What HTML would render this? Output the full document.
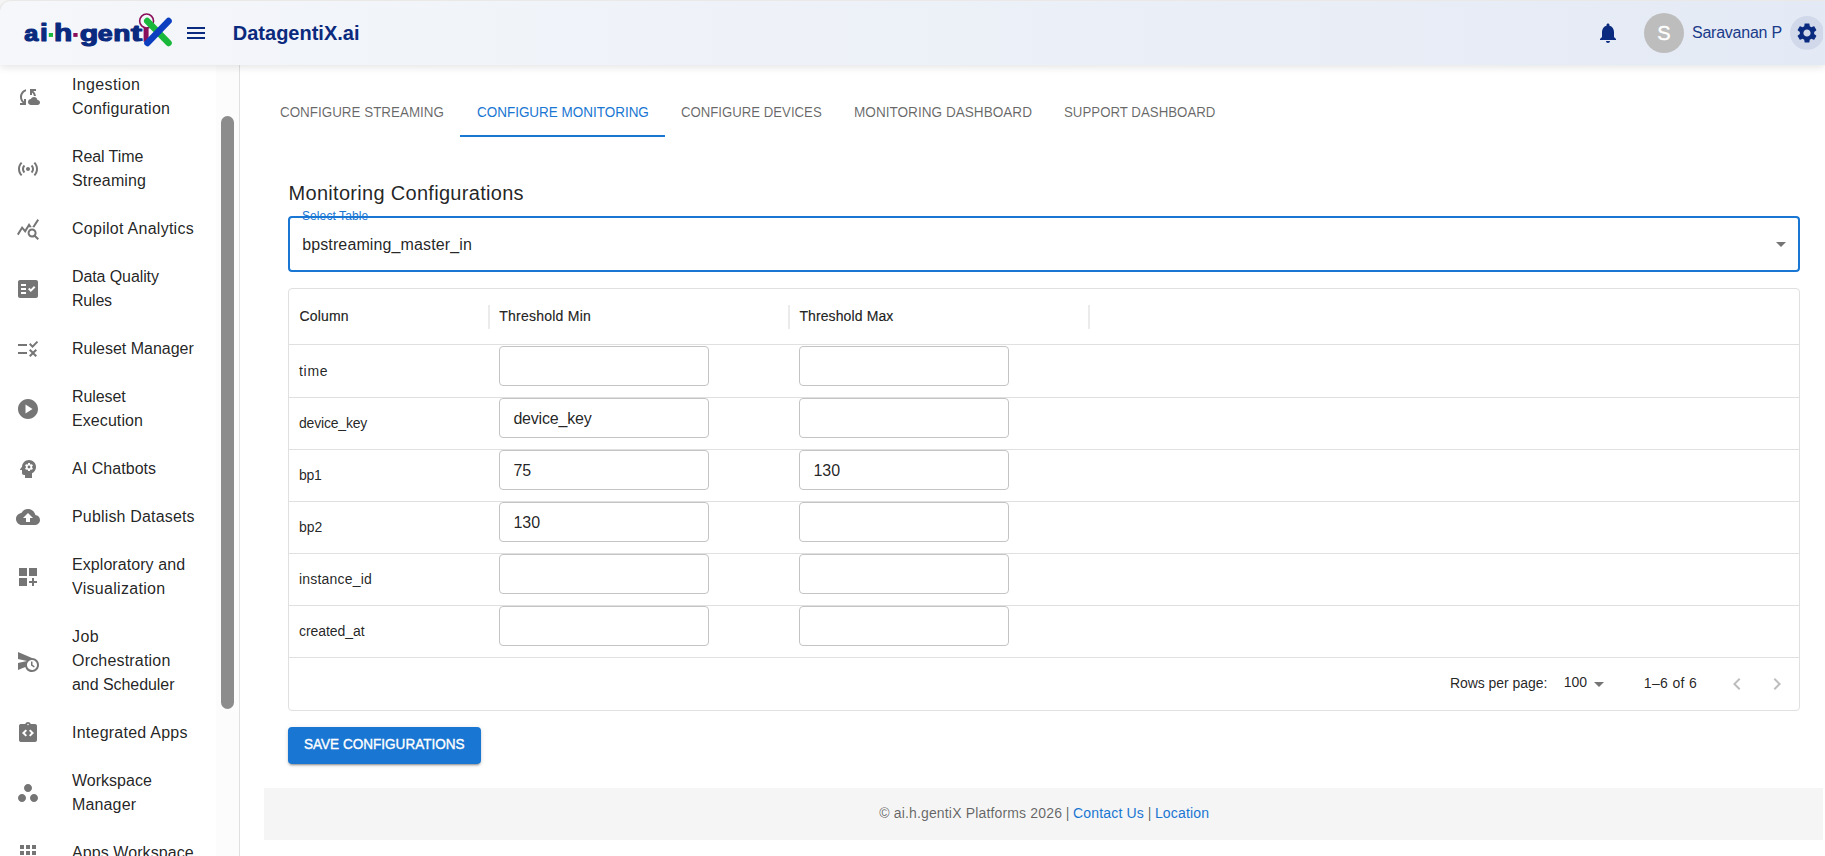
<!DOCTYPE html>
<html>
<head>
<meta charset="utf-8">
<title>DatagentiX.ai</title>
<style>
*{box-sizing:border-box;margin:0;padding:0}
html,body{width:1825px;height:856px;overflow:hidden;background:#fff}
body{font-family:"Liberation Sans",sans-serif;color:rgba(0,0,0,.87);position:relative}
.abs{position:absolute}
.nw{white-space:nowrap}
#topstrip{left:0;top:0;width:1825px;height:12px;background:#f7f7f7}
#frame{left:-1px;top:0;width:1830px;height:30px;border-top:1px solid #eae9e7;border-left:1px solid #e6e6e6;border-top-left-radius:12px;z-index:8}
#hdr{left:0;top:1px;width:1825px;height:64px;background:linear-gradient(90deg,#f5f7fa 0%,#e4eaf5 100%);border-top-left-radius:11px;box-shadow:0 2px 8px rgba(0,0,0,.115);z-index:5}
.z6{z-index:6}
#title{left:232.8px;top:21px;font-size:20px;font-weight:700;color:#0b2a7d;line-height:24px;white-space:nowrap;letter-spacing:0}
#uname{left:1692px;top:23px;font-size:16px;color:#1a3a8a;line-height:20px;white-space:nowrap;letter-spacing:-.24px}
#avatar{left:1644px;top:13px;width:40px;height:40px;border-radius:50%;background:#bdbdbd;color:#fff;font-size:20px;line-height:40px;text-align:center;-webkit-text-stroke:.4px #fff}
#gearbg{left:1789.8px;top:15.8px;width:34px;height:34px;border-radius:50%;background:#d0d8ea;clip-path:inset(0 .8px 0 0)}
#side{left:0;top:60px;width:240px;height:796px;border-right:1px solid #e0e0e0;background:#fff;overflow:hidden}
#track{left:216px;top:0;width:23px;height:796px;background:#fcfcfc}
#thumb{left:221px;top:56px;width:13px;height:593px;border-radius:7px;background:#8c8c8c}
.it{position:absolute;left:0;width:216px}
.it svg{position:absolute;left:16px;width:24px;height:24px;fill:#757575}
.it .t{position:absolute;left:72px;font-size:16px;line-height:24px;white-space:nowrap;color:rgba(0,0,0,.87)}
.it .t span{display:block}
.tab{position:absolute;top:88px;height:48px;font-size:14px;line-height:48px;color:rgba(0,0,0,.6);white-space:nowrap;transform-origin:0 50%}
.tab.on{color:#1976d2}
#ul{left:460px;top:135px;width:205px;height:2px;background:#1976d2}
#h6{left:288.5px;top:177px;font-size:20px;line-height:32px;white-space:nowrap;letter-spacing:.3px}
#sel{left:288px;top:216px;width:1512px;height:56px;border:2px solid #1976d2;border-radius:4px}
#sellab{left:302px;top:209px;font-size:12px;line-height:14px;color:#1976d2;white-space:nowrap;letter-spacing:.09px}
#selval{left:302.2px;top:233px;font-size:16px;line-height:24px;white-space:nowrap;letter-spacing:.12px}
#grid{left:288px;top:288px;width:1512px;height:423px;border:1px solid #e0e0e0;border-radius:4px}
.hl{position:absolute;left:289px;width:1510px;height:1px;background:#e0e0e0}
.sep{position:absolute;top:305px;width:2px;height:24px;background:#ebebeb}
.ch{position:absolute;top:306px;font-size:14px;line-height:20px;white-space:nowrap;-webkit-text-stroke:.2px rgba(0,0,0,.87)}
.cn{position:absolute;left:299px;font-size:14px;line-height:20px;white-space:nowrap}
.inp{position:absolute;width:210px;height:40px;border:1px solid #c4c4c4;border-radius:4px;background:#fff;font-size:16px;line-height:40px;padding-left:13.4px;white-space:nowrap}
.pg{position:absolute;top:673px;font-size:14px;line-height:20px;white-space:nowrap}
#btn{left:288px;top:727px;width:193px;height:37px;border-radius:4px;background:#1976d2;box-shadow:0 3px 1px -2px rgba(0,0,0,.2),0 2px 2px 0 rgba(0,0,0,.14),0 1px 5px 0 rgba(0,0,0,.12)}
#btnt{left:304.1px;top:732px;color:#fff;font-size:14px;line-height:24px;white-space:nowrap;-webkit-text-stroke:.35px #fff;transform-origin:0 50%;transform:scaleX(.968)}
#foot{left:264px;top:788px;width:1559px;height:52px;background:#f5f5f5}
#foott{left:879.2px;top:803px;font-size:14px;line-height:20px;color:rgba(0,0,0,.6);white-space:nowrap;letter-spacing:.16px}
#foott span{color:#1976d2}
#foott i{font-style:normal;letter-spacing:-.15px}
</style>
</head>
<body>
<div class="abs" id="topstrip"></div>
<div class="abs" id="hdr"></div>
<div class="abs" id="frame"></div>
<svg class="abs z6" style="left:0;top:0" width="240" height="66" viewBox="0 0 240 66">
  <g font-family="Liberation Sans, sans-serif" font-weight="700" font-size="100" fill="#0a2a7f" stroke="#0a2a7f" stroke-width="1.3" stroke-linejoin="round">
    <text vector-effect="non-scaling-stroke" transform="translate(24.19,40.88) scale(0.2527,0.2218)">a</text>
    <text vector-effect="non-scaling-stroke" transform="translate(40.02,40.90) scale(0.2800,0.2466)">i</text>
    <text vector-effect="non-scaling-stroke" transform="translate(53.96,40.90) scale(0.2990,0.2356)">h</text>
    <text vector-effect="non-scaling-stroke" transform="translate(79.64,41.04) scale(0.3029,0.2171)">g</text>
    <text vector-effect="non-scaling-stroke" transform="translate(97.70,40.88) scale(0.2680,0.2182)">e</text>
    <text vector-effect="non-scaling-stroke" transform="translate(113.21,40.70) scale(0.2816,0.2148)">n</text>
    <text vector-effect="non-scaling-stroke" transform="translate(130.76,40.87) scale(0.3437,0.2269)">t</text>
  </g>
  <rect x="48.8" y="33" width="4.2" height="3.9" fill="#1ab83a"/>
  <rect x="73.300" y="33" width="4.300" height="3.900" fill="#8a0f5a"/>
  <rect x="143.600" y="27.500" width="5" height="14.300" fill="#8a0f5a"/>
  <circle cx="146.600" cy="21" r="6.950" fill="none" stroke="#8a0f5a" stroke-width="1.600"/>
  <line x1="147.200" y1="21" x2="168.600" y2="43" stroke="#1ab83a" stroke-width="6.400" stroke-linecap="round"/>
  <line x1="168.600" y1="21" x2="147.400" y2="43" stroke="#0c3fc0" stroke-width="6.400" stroke-linecap="round"/>
  <path transform="translate(184,21)" fill="#0a2a7f" d="M3 18h18v-2H3v2zm0-5h18v-2H3v2zm0-7v2h18V6H3z"/>
</svg>
<div class="abs z6" id="title">DatagentiX.ai</div>
<svg class="abs z6" style="left:1596px;top:21px" width="24" height="24" viewBox="0 0 24 24"><path fill="#0a2a7f" d="M12 22c1.1 0 2-.9 2-2h-4c0 1.1.89 2 2 2zm6-6v-5c0-3.07-1.64-5.64-4.5-6.32V4c0-.83-.67-1.500-1.500-1.500s-1.500.67-1.500 1.500v.68C7.630 5.360 6 7.920 6 11v5l-2 2v1h16v-1l-2-2z"/></svg>
<div class="abs z6" id="avatar">S</div>
<div class="abs z6" id="uname">Saravanan P</div>
<div class="abs z6" id="gearbg"></div>
<svg class="abs z6" style="left:1794.5px;top:21px;z-index:7" width="24" height="24" viewBox="0 0 24 24"><path fill="#0a2a7f" d="M19.14 12.94c.04-.3.06-.61.06-.94 0-.32-.02-.64-.07-.94l2.03-1.58c.18-.14.23-.41.12-.61l-1.92-3.32c-.12-.22-.37-.29-.59-.22l-2.39.96c-.5-.38-1.03-.7-1.62-.94l-.36-2.54c-.04-.24-.24-.41-.48-.41h-3.84c-.24 0-.43.17-.47.41l-.36 2.54c-.59.24-1.13.57-1.62.94l-2.39-.96c-.22-.08-.47 0-.59.22L2.74 8.87c-.12.21-.08.47.12.61l2.03 1.58c-.05.3-.09.63-.09.94s.02.64.07.94l-2.03 1.58c-.18.14-.23.41-.12.61l1.92 3.32c.12.22.37.29.59.22l2.39-.96c.5.38 1.03.7 1.620.94l.36 2.54c.05.24.24.41.48.41h3.840c.24 0 .44-.17.47-.41l.36-2.54c.59-.24 1.130-.56 1.620-.94l2.390.96c.22.08.47 0 .59-.22l1.920-3.320c.12-.22.07-.47-.12-.61l-2.010-1.580zM12 15.600c-1.980 0-3.600-1.620-3.600-3.600s1.620-3.600 3.600-3.600 3.600 1.620 3.600 3.600-1.620 3.600-3.600 3.600z"/></svg>
<div class="abs" id="side">
<div class="it" style="top:0px;height:72px"><svg viewBox="0 0 24 24" style="top:25px"><path d="M21.5 14.98c-.02 0-.03 0-.05.01C21.2 13.3 19.76 12 18 12c-1.4 0-2.6.83-3.16 2.02C13.26 14.1 12 15.4 12 17c0 1.66 1.34 3 3 3l6.5-.02c1.38 0 2.5-1.12 2.5-2.5s-1.12-2.5-2.5-2.5zM10 4.26v2.09C7.67 7.18 6 9.39 6 12c0 1.77.78 3.34 2 4.44V14h2v6H4v-2h2.73C5.06 16.54 4 14.4 4 12c0-3.73 2.55-6.85 6-7.74zM20 6h-2.73c1.43 1.26 2.41 3.01 2.66 5h-2.02c-.23-1.36-.93-2.55-1.91-3.44V10h-2V4h6v2z"/></svg><div class="t" style="top:13px"><span style="letter-spacing:0.36px">Ingestion</span><span style="letter-spacing:0.23px">Configuration</span></div></div>
<div class="it" style="top:72px;height:72px"><svg viewBox="0 0 24 24" style="top:25px"><path d="M7.76 16.24C6.67 15.16 6 13.66 6 12s.67-3.16 1.76-4.24l1.42 1.42C8.45 9.9 8 10.9 8 12c0 1.1.45 2.1 1.17 2.83l-1.41 1.41zm8.48 0C17.33 15.16 18 13.66 18 12s-.67-3.16-1.76-4.24l-1.42 1.42C15.55 9.9 16 10.9 16 12c0 1.1-.45 2.1-1.17 2.83l1.41 1.41zM12 10c-1.1 0-2 .9-2 2s.9 2 2 2 2-.9 2-2-.9-2-2-2zm8 2c0 2.21-.9 4.21-2.35 5.65l1.42 1.42C20.88 17.26 22 14.76 22 12s-1.12-5.26-2.93-7.07l-1.42 1.42C19.1 7.79 20 9.79 20 12zM6.35 6.35 4.93 4.93C3.12 6.74 2 9.24 2 12s1.12 5.26 2.93 7.07l1.42-1.42C4.9 16.21 4 14.21 4 12s.9-4.21 2.35-5.65z"/></svg><div class="t" style="top:13px"><span style="letter-spacing:-0.09px">Real Time</span><span style="letter-spacing:0.13px">Streaming</span></div></div>
<div class="it" style="top:144px;height:48px"><svg viewBox="0 0 24 24" style="top:13px"><path d="M19.88 18.47c.44-.7.7-1.51.7-2.39 0-2.49-2.01-4.5-4.5-4.5s-4.5 2.01-4.5 4.5 2.01 4.5 4.49 4.5c.88 0 1.7-.26 2.39-.7L21.58 23 23 21.58l-3.12-3.11zm-3.8.11c-1.38 0-2.5-1.12-2.5-2.5s1.12-2.5 2.5-2.5 2.5 1.12 2.5 2.5-1.12 2.5-2.5 2.5zm-.36-8.5c-.74.02-1.45.18-2.1.45l-.55-.83-3.8 6.18-3.01-3.52-3.63 5.81L1 17l5-8 3 3.5L13 6l2.72 4.08zm2.59.5c-.64-.28-1.33-.45-2.05-.49L21.38 2 23 3.18l-4.69 7.4z"/></svg><div class="t" style="top:13px"><span style="letter-spacing:0.27px">Copilot Analytics</span></div></div>
<div class="it" style="top:192px;height:72px"><svg viewBox="0 0 24 24" style="top:25px"><path d="M20 3H4c-1.1 0-2 .9-2 2v14c0 1.1.9 2 2 2h16c1.1 0 2-.9 2-2V5c0-1.1-.9-2-2-2zM10 17H5v-2h5v2zm0-4H5v-2h5v2zm0-4H5V7h5v2zm4.82 6L12 12.16l1.41-1.41 1.41 1.42L17.99 9l1.42 1.42L14.82 15z"/></svg><div class="t" style="top:13px"><span style="letter-spacing:-0.1px">Data Quality</span><span style="letter-spacing:-0.2px">Rules</span></div></div>
<div class="it" style="top:264px;height:48px"><svg viewBox="0 0 24 24" style="top:13px"><path d="M16.54 11 13 7.46l1.41-1.41 2.12 2.12 4.24-4.24 1.41 1.41L16.54 11zM11 7H2v2h9V7zm10 6.41L19.59 12 17 14.59 14.41 12 13 13.41 15.59 16 13 18.59 14.41 20 17 17.41 19.59 20 21 18.59 18.41 16 21 13.41zM11 15H2v2h9v-2z"/></svg><div class="t" style="top:13px"><span style="letter-spacing:0px">Ruleset Manager</span></div></div>
<div class="it" style="top:312px;height:72px"><svg viewBox="0 0 24 24" style="top:25px"><path d="M12 2C6.48 2 2 6.48 2 12s4.48 10 10 10 10-4.48 10-10S17.52 2 12 2zM9.5 16.5v-9l7 4.5-7 4.5z"/></svg><div class="t" style="top:13px"><span style="letter-spacing:-0.1px">Ruleset</span><span style="letter-spacing:0.08px">Execution</span></div></div>
<div class="it" style="top:384px;height:48px"><svg viewBox="0 0 24 24" style="top:13px"><path d="M13 8.57c-.79 0-1.43.64-1.43 1.43s.64 1.43 1.43 1.43 1.43-.64 1.43-1.43-.64-1.43-1.43-1.43z M13 3C9.25 3 6.2 5.94 6.02 9.64L4.1 12.2c-.25.33-.01.8.4.8H6v3c0 1.1.9 2 2 2h1v3h7v-4.68c2.36-1.12 4-3.53 4-6.32 0-3.87-3.13-7-7-7zm3 7c0 .13-.01.26-.02.39l.83.66c.08.06.1.16.05.25l-.8 1.39c-.05.09-.16.12-.24.09l-.99-.4c-.21.16-.43.29-.67.39L14 13.83c-.01.1-.1.17-.2.17h-1.6c-.1 0-.18-.07-.2-.17l-.15-1.06c-.25-.1-.47-.23-.68-.39l-.99.4c-.9.03-.2 0-.25-.09l-.8-1.39c-.05-.08-.03-.19.05-.25l.84-.66c-.01-.13-.02-.26-.02-.39s.02-.27.04-.39l-.85-.66c-.08-.06-.1-.16-.05-.26l.8-1.38c.05-.09.15-.12.24-.09l1 .4c.2-.15.43-.29.67-.39L12 6.17c.02-.1.1-.17.2-.17h1.6c.1 0 .18.07.2.17l.15 1.06c.24.1.46.23.67.39l1-.4c.09-.03.2 0 .24.09l.8 1.38c.05.09.03.2-.05.26l-.85.66c.03.12.04.25.04.39z"/></svg><div class="t" style="top:13px"><span style="letter-spacing:0.05px">AI Chatbots</span></div></div>
<div class="it" style="top:432px;height:48px"><svg viewBox="0 0 24 24" style="top:13px"><path d="M19.35 10.04C18.67 6.59 15.64 4 12 4 9.11 4 6.6 5.64 5.35 8.04 2.34 8.36 0 10.91 0 14c0 3.31 2.69 6 6 6h13c2.76 0 5-2.24 5-5 0-2.64-2.05-4.78-4.65-4.96zM14 13v4h-4v-4H7l5-5 5 5h-3z"/></svg><div class="t" style="top:13px"><span style="letter-spacing:0.17px">Publish Datasets</span></div></div>
<div class="it" style="top:480px;height:72px"><svg viewBox="0 0 24 24" style="top:25px"><path d="M3 3h8v8H3zm10 0h8v8h-8zM3 13h8v8H3zm15 0h-2v3h-3v2h3v3h2v-3h3v-2h-3z"/></svg><div class="t" style="top:13px"><span style="letter-spacing:0.07px">Exploratory and</span><span style="letter-spacing:0.3px">Visualization</span></div></div>
<div class="it" style="top:552px;height:96px"><svg viewBox="0 0 24 24" style="top:37px"><path d="M16.5 12.5H15v4l3 2 .75-1.23-2.25-1.52V12.5zM16 9 2 3v7l9 2-9 2v7l7.27-3.11C10.09 20.83 12.79 23 16 23c3.86 0 7-3.14 7-7s-3.14-7-7-7zm0 12c-2.75 0-4.98-2.22-5-4.97v-.07c.02-2.74 2.25-4.97 5-4.97 2.76 0 5 2.24 5 5S18.76 21 16 21z"/></svg><div class="t" style="top:13px"><span style="letter-spacing:0.4px">Job</span><span style="letter-spacing:0.19px">Orchestration</span><span style="letter-spacing:-0.06px">and Scheduler</span></div></div>
<div class="it" style="top:648px;height:48px"><svg viewBox="0 0 24 24" style="top:13px"><path d="M19 3h-4.180C14.4 1.84 13.3 1 12 1s-2.4.84-2.82 2H5c-.14 0-.27.01-.4.04-.39.08-.74.28-1.010.55-.18.18-.33.4-.43.64S3 4.720 3 5v14c0 .27.06.54.16.78s.25.45.43.64c.27.27.62.47 1.010.55.13.02.26.03.4.03h14c1.1 0 2-.9 2-2V5c0-1.1-.9-2-2-2zm-8 11.170-1.410 1.420L6 12l3.590-3.590L11 9.830 8.830 12 11 14.170zm1-9.920c-.41 0-.75-.34-.75-.75s.34-.75.75-.75.75.34.75.75-.34.75-.75.75zm2.410 11.340L13 14.170 15.170 12 13 9.830l1.410-1.420L18 12l-3.590 3.590z"/></svg><div class="t" style="top:13px"><span style="letter-spacing:0.24px">Integrated Apps</span></div></div>
<div class="it" style="top:696px;height:72px"><svg viewBox="0 0 24 24" style="top:25px"><path d="M6 13c-2.2 0-4 1.8-4 4s1.8 4 4 4 4-1.8 4-4-1.8-4-4-4zm6-10C9.8 3 8 4.8 8 7s1.800 4 4 4 4-1.800 4-4-1.800-4-4-4zm6 10c-2.200 0-4 1.800-4 4s1.800 4 4 4 4-1.800 4-4-1.800-4-4-4z"/></svg><div class="t" style="top:13px"><span style="letter-spacing:0.01px">Workspace</span><span style="letter-spacing:0.15px">Manager</span></div></div>
<div class="it" style="top:768px;height:48px"><svg viewBox="0 0 24 24" style="top:13px"><path d="M4 8h4V4H4v4zm6 12h4v-4h-4v4zm-6 0h4v-4H4v4zm0-6h4v-4H4v4zm6 0h4v-4h-4v4zm6-10v4h4V4h-4zm-6 4h4V4h-4v4zm6 6h4v-4h-4v4zm0 6h4v-4h-4v4z"/></svg><div class="t" style="top:13px"><span style="letter-spacing:0.08px">Apps Workspace</span></div></div>
<div class="abs" id="track"></div><div class="abs" id="thumb"></div></div>
<div class="tab" style="left:279.8px;transform:scaleX(0.958)">CONFIGURE STREAMING</div>
<div class="tab on" style="left:476.7px;transform:scaleX(0.962)">CONFIGURE MONITORING</div>
<div class="tab" style="left:681.0px;transform:scaleX(0.942)">CONFIGURE DEVICES</div>
<div class="tab" style="left:854.0px;transform:scaleX(0.971)">MONITORING DASHBOARD</div>
<div class="tab" style="left:1063.9px;transform:scaleX(0.948)">SUPPORT DASHBOARD</div>
<div class="abs" id="ul"></div>
<div class="abs" id="h6">Monitoring Configurations</div>
<div class="abs" id="sel"></div>
<div class="abs" id="sellab">Select Table</div>
<div class="abs" id="selval">bpstreaming_master_in</div>
<svg class="abs " style="left:1769px;top:232px" width="24" height="24" viewBox="0 0 24 24"><path fill="#757575" d="M7 10l5 5 5-5z"/></svg>
<div class="abs" id="grid"></div>
<div class="hl" style="top:344px"></div>
<div class="hl" style="top:397px"></div>
<div class="hl" style="top:449px"></div>
<div class="hl" style="top:501px"></div>
<div class="hl" style="top:553px"></div>
<div class="hl" style="top:605px"></div>
<div class="hl" style="top:657px"></div>
<div class="sep" style="left:488px"></div>
<div class="sep" style="left:788px"></div>
<div class="sep" style="left:1088px"></div>
<div class="ch" style="left:299.5px;letter-spacing:0.17px">Column</div>
<div class="ch" style="left:499.3px;letter-spacing:0.23px">Threshold Min</div>
<div class="ch" style="left:799.4px;letter-spacing:0.11px">Threshold Max</div>
<div class="cn" style="top:361px;letter-spacing:0.7px">time</div>
<div class="inp" style="left:499px;top:346px"></div>
<div class="inp" style="left:799px;top:346px"></div>
<div class="cn" style="top:413px;letter-spacing:-0.19px">device_key</div>
<div class="inp" style="left:499px;top:398px;letter-spacing:-.19px">device_key</div>
<div class="inp" style="left:799px;top:398px"></div>
<div class="cn" style="top:465px;letter-spacing:-0.3px">bp1</div>
<div class="inp" style="left:499px;top:450px">75</div>
<div class="inp" style="left:799px;top:450px">130</div>
<div class="cn" style="top:517px;letter-spacing:0px">bp2</div>
<div class="inp" style="left:499px;top:502px">130</div>
<div class="inp" style="left:799px;top:502px"></div>
<div class="cn" style="top:569px;letter-spacing:0.19px">instance_id</div>
<div class="inp" style="left:499px;top:554px"></div>
<div class="inp" style="left:799px;top:554px"></div>
<div class="cn" style="top:621px;letter-spacing:-0.05px">created_at</div>
<div class="inp" style="left:499px;top:606px"></div>
<div class="inp" style="left:799px;top:606px"></div>
<div class="pg" style="left:1449.9px;letter-spacing:-.05px">Rows per page:</div>
<div class="pg" style="left:1563.8px;top:672px;letter-spacing:-.1px">100</div>
<svg class="abs " style="left:1587px;top:671.5px" width="24" height="24" viewBox="0 0 24 24"><path fill="#757575" d="M7 10l5 5 5-5z"/></svg>
<div class="pg" style="left:1643.8px;letter-spacing:.35px">1–6 of 6</div>
<svg class="abs " style="left:1725px;top:671.5px" width="24" height="24" viewBox="0 0 24 24"><path fill="#bdbdbd" d="M15.41 16.59L10.83 12l4.58-4.59L14 6l-6 6 6 6 1.41-1.41z"/></svg>
<svg class="abs " style="left:1765px;top:671.5px" width="24" height="24" viewBox="0 0 24 24"><path fill="#bdbdbd" d="M8.59 16.59L13.17 12 8.59 7.41 10 6l6 6-6 6-1.41-1.41z"/></svg>
<div class="abs" id="btn"></div><div class="abs" id="btnt">SAVE CONFIGURATIONS</div>
<div class="abs" id="foot"></div>
<div class="abs" id="foott">© ai.h.gentiX Platforms 2026<i> | </i><span>Contact Us</span><i> | </i><span>Location</span></div>
</body>
</html>
